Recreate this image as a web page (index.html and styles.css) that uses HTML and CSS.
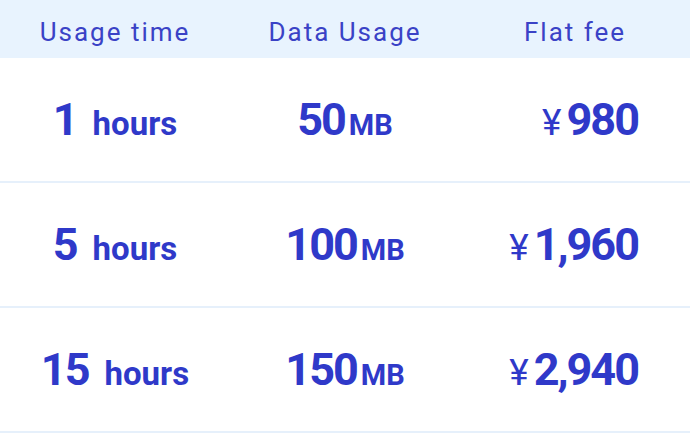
FILE: index.html
```html
<!DOCTYPE html>
<html lang="en">
<head>
<meta charset="utf-8">
<title>Plans</title>
<link rel="stylesheet" href="styles.css">
</head>
<body>
<div class="table">
  <div class="row head">
    <div class="cell">Usage time</div>
    <div class="cell">Data Usage</div>
    <div class="cell">Flat fee</div>
  </div>
  <div class="row">
    <div class="cell"><span class="num">1</span><span class="unit">hours</span></div>
    <div class="cell"><span class="num">50</span><span class="mb">MB</span></div>
    <div class="cell fee"><span class="yen">¥</span><span class="num">980</span></div>
  </div>
  <div class="row">
    <div class="cell"><span class="num">5</span><span class="unit">hours</span></div>
    <div class="cell"><span class="num">100</span><span class="mb">MB</span></div>
    <div class="cell fee"><span class="yen">¥</span><span class="num">1,960</span></div>
  </div>
  <div class="row">
    <div class="cell"><span class="num">15</span><span class="unit">hours</span></div>
    <div class="cell"><span class="num">150</span><span class="mb">MB</span></div>
    <div class="cell fee"><span class="yen">¥</span><span class="num">2,940</span></div>
  </div>
</div>
</body>
</html>
```

FILE: styles.css
```css
html, body {
  margin: 0;
  padding: 0;
  background: #ffffff;
}
body {
  font-family: Roboto, "Noto Sans", sans-serif;
  color: #2f39c9;
}
.table {
  display: flex;
  flex-direction: column;
  width: 690px;
}
.row {
  display: grid;
  grid-template-columns: 230px 230px 230px;
  height: 123px;
  border-bottom: 2px solid #e6f0fb;
  align-items: center;
}
.row.head {
  height: 58px;
  border-bottom: none;
  background: #e8f3fe;
}
.head .cell {
  font-size: 26px;
  font-weight: 400;
  letter-spacing: 2px;
  color: #3a42c6;
  text-align: center;
  padding-top: 5px;
}
.cell {
  text-align: center;
  white-space: nowrap;
}
.cell.fee {
  text-align: right;
  padding-right: 52px;
}
.num {
  font-size: 45px;
  font-weight: 700;
  letter-spacing: -2px;
}
.unit {
  font-size: 33px;
  font-weight: 700;
  margin-left: 16px;
}
.mb {
  font-size: 29px;
  font-weight: 700;
  margin-left: 4px;
}
.yen {
  font-size: 37px;
  font-weight: 400;
  margin-right: 5px;
}
```
